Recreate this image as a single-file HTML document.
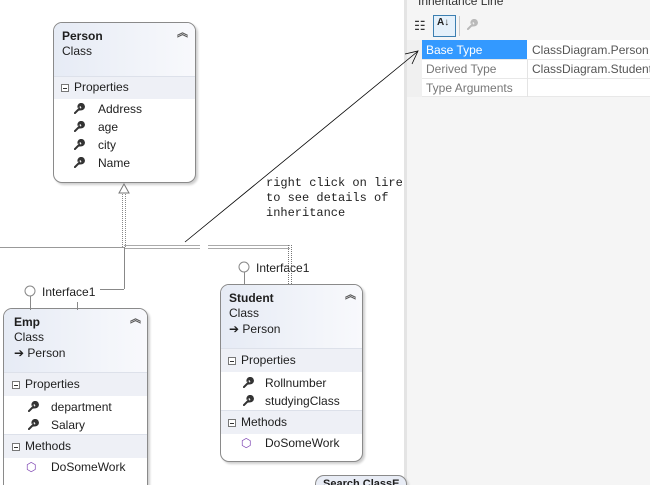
<!DOCTYPE html>
<html style="width:650px;height:485px;overflow:hidden"><head><meta charset="utf-8"><style>
*{margin:0;padding:0;box-sizing:border-box}
body{width:650px;height:485px;overflow:hidden;background:#fff;position:relative;font-family:"Liberation Sans",sans-serif;font-size:12px;color:#1e1e1e}
.a{position:absolute}
.box{position:absolute;border:1px solid #8a8a8a;border-radius:9px;background:#fff;box-shadow:2px 2px 2px #cfcfcf;overflow:hidden}
.hdr{position:absolute;left:0;right:0;top:0;background:linear-gradient(to right,#e6ebf5,#f3f5fa 70%,#f8f9fc)}
.band{position:absolute;left:0;right:0;background:#eef0f6;border-top:1px solid #dde1ea}
.t{position:absolute;white-space:nowrap}
.b{font-weight:bold}
.chev{position:absolute;font-size:11px;color:#555;font-weight:bold;line-height:8px}
.mi{display:inline-block;width:8px;height:8px;border:1px solid #777;background:#fff;position:relative;vertical-align:middle;margin-right:5px}
.mi:after{content:"";position:absolute;left:1px;top:3px;width:4px;height:1px;background:#333}
.w{position:absolute}
.mono{font-family:"Liberation Mono",monospace;font-size:12px}
</style></head><body>
<svg width="0" height="0" style="position:absolute"><defs>
<symbol id="wr" viewBox="0 0 12 12"><path d="M1,11 L6,6 M5,5 A3,3 0 1 1 8,7 L9.5,5.5 L8,3 L9.5,2 A3,3 0 0 0 5,5Z" stroke="#333" stroke-width="2.2" fill="#333" stroke-linecap="round"/></symbol>
</defs></svg>

<!-- right panel -->
<div class="a" style="left:404px;top:0;width:246px;height:485px;background:#f5f5f5;border-left:3px solid #e4e4e4"></div>
<div class="t" style="left:418px;top:-6px;color:#333">Inheritance Line</div>
<div class="t" style="left:414px;top:18px;font-size:13px;color:#333">☷</div>
<div class="a" style="left:433px;top:15px;width:23px;height:22px;border:1px solid #3c7fb1;background:#e5f1fb"></div>
<div class="t b" style="left:437px;top:17px;font-size:10px;color:#222">A↓</div>
<div class="a" style="left:459px;top:16px;width:1px;height:20px;background:#ccc"></div>
<svg class="w" style="left:467px;top:19px" width="11" height="11"><use href="#wr" opacity="0.3"/></svg>
<div class="a" style="left:407px;top:40px;width:15px;height:57px;background:#f0f0f0"></div>
<div class="a" style="left:422px;top:40px;width:105px;height:19px;background:#3399ff"></div>
<div class="t" style="left:426px;top:43px;color:#fff">Base Type</div>
<div class="a" style="left:527px;top:40px;width:123px;height:19px;background:#fff"></div>
<div class="t" style="left:532px;top:43px;color:#555">ClassDiagram.Person</div>
<div class="a" style="left:422px;top:59px;width:228px;height:19px;background:#fff;border-top:1px solid #e8e8e8"></div>
<div class="a" style="left:527px;top:59px;width:1px;height:38px;background:#e4e4e4"></div>
<div class="t" style="left:426px;top:62px;color:#777">Derived Type</div>
<div class="t" style="left:532px;top:62px;color:#555">ClassDiagram.Student</div>
<div class="a" style="left:422px;top:78px;width:228px;height:19px;background:#fff;border-top:1px solid #e8e8e8;border-bottom:1px solid #e8e8e8"></div>
<div class="a" style="left:527px;top:78px;width:1px;height:19px;background:#e4e4e4"></div>
<div class="t" style="left:426px;top:81px;color:#777">Type Arguments</div>

<!-- lines -->
<svg class="a" style="left:0;top:0;z-index:2" width="650" height="485">
<line x1="0" y1="247.5" x2="124" y2="247.5" stroke="#999"/>
<line x1="124" y1="245.5" x2="290" y2="245.5" stroke="#aaa"/>
<line x1="124" y1="248.5" x2="290" y2="248.5" stroke="#aaa"/>
<line x1="122.5" y1="190" x2="122.5" y2="247" stroke="#888" stroke-dasharray="1 1"/>
<line x1="125.5" y1="190" x2="125.5" y2="247" stroke="#888" stroke-dasharray="1 1"/>
<polygon points="119,193 124,184 129,193" fill="#fff" stroke="#777"/>
<line x1="124.5" y1="247" x2="124.5" y2="289" stroke="#888"/>
<line x1="100" y1="289.5" x2="124" y2="289.5" stroke="#888"/>
<line x1="288.5" y1="245" x2="288.5" y2="285" stroke="#777" stroke-dasharray="1 1"/>
<line x1="291.5" y1="245" x2="291.5" y2="285" stroke="#777" stroke-dasharray="1 1"/>
<rect x="200" y="244" width="8" height="6" fill="#fff"/>
<circle cx="30" cy="291" r="5" fill="#fff" stroke="#888"/>
<line x1="30.5" y1="296" x2="30.5" y2="310" stroke="#888"/>
<line x1="77.5" y1="302" x2="77.5" y2="310" stroke="#888"/>
<circle cx="244" cy="267" r="5" fill="#fff" stroke="#888"/>
<line x1="244.5" y1="272" x2="244.5" y2="285" stroke="#888"/>
<line x1="185" y1="242" x2="417" y2="52" stroke="#000" stroke-width="0.8"/>
<path d="M405,54 L418,51 L412,64" fill="none" stroke="#000" stroke-width="0.8"/>
</svg>
<div class="t" style="left:42px;top:285px">Interface1</div>
<div class="t" style="left:256px;top:261px">Interface1</div>

<div class="t mono" style="left:266px;top:176px;line-height:15px">right click on lire<br>to see details of<br>inheritance</div>

<!-- Person -->
<div class="box" style="left:53px;top:22px;width:143px;height:161px">
 <div class="hdr" style="height:53px"></div>
 <div class="t b" style="left:8px;top:6px">Person</div>
 <div class="t" style="left:8px;top:21px">Class</div>
 <div class="chev" style="left:123px;top:6px">︽</div>
 <div class="band" style="top:53px;height:23px"></div>
 <div class="t" style="left:7px;top:57px"><span class="mi"></span>Properties</div>
 <svg class="w" style="left:20px;top:80px" width="11" height="11"><use href="#wr"/></svg>
 <div class="t" style="left:44px;top:79px">Address</div>
 <svg class="w" style="left:20px;top:98px" width="11" height="11"><use href="#wr"/></svg>
 <div class="t" style="left:44px;top:97px">age</div>
 <svg class="w" style="left:20px;top:116px" width="11" height="11"><use href="#wr"/></svg>
 <div class="t" style="left:44px;top:115px">city</div>
 <svg class="w" style="left:20px;top:134px" width="11" height="11"><use href="#wr"/></svg>
 <div class="t" style="left:44px;top:133px">Name</div>
</div>

<!-- Emp -->
<div class="box" style="left:3px;top:308px;width:145px;height:190px">
 <div class="hdr" style="height:63px"></div>
 <div class="t b" style="left:10px;top:6px">Emp</div>
 <div class="t" style="left:10px;top:21px">Class</div>
 <div class="t" style="left:10px;top:37px">➔ Person</div>
 <div class="chev" style="left:126px;top:6px">︽</div>
 <div class="band" style="top:63px;height:24px"></div>
 <div class="t" style="left:8px;top:68px"><span class="mi"></span>Properties</div>
 <svg class="w" style="left:24px;top:92px" width="11" height="11"><use href="#wr"/></svg>
 <div class="t" style="left:47px;top:91px">department</div>
 <svg class="w" style="left:24px;top:110px" width="11" height="11"><use href="#wr"/></svg>
 <div class="t" style="left:47px;top:109px">Salary</div>
 <div class="band" style="top:125px;height:24px"></div>
 <div class="t" style="left:8px;top:130px"><span class="mi"></span>Methods</div>
 <div class="t" style="left:22px;top:151px;color:#7a3fb0">⬡</div>
 <div class="t" style="left:47px;top:151px">DoSomeWork</div>
</div>

<!-- Student -->
<div class="box" style="left:220px;top:284px;width:143px;height:178px">
 <div class="hdr" style="height:63px"></div>
 <div class="t b" style="left:8px;top:6px">Student</div>
 <div class="t" style="left:8px;top:21px">Class</div>
 <div class="t" style="left:8px;top:37px">➔ Person</div>
 <div class="chev" style="left:124px;top:6px">︽</div>
 <div class="band" style="top:63px;height:24px"></div>
 <div class="t" style="left:7px;top:68px"><span class="mi"></span>Properties</div>
 <svg class="w" style="left:22px;top:92px" width="11" height="11"><use href="#wr"/></svg>
 <div class="t" style="left:44px;top:91px">Rollnumber</div>
 <svg class="w" style="left:22px;top:110px" width="11" height="11"><use href="#wr"/></svg>
 <div class="t" style="left:44px;top:109px">studyingClass</div>
 <div class="band" style="top:125px;height:24px"></div>
 <div class="t" style="left:7px;top:130px"><span class="mi"></span>Methods</div>
 <div class="t" style="left:20px;top:151px;color:#7a3fb0">⬡</div>
 <div class="t" style="left:44px;top:151px">DoSomeWork</div>
</div>

<!-- bottom comment box -->
<div class="box" style="left:315px;top:475px;width:92px;height:30px;background:#e8ecf5;z-index:3"></div>
<div class="t b" style="left:323px;top:478px;font-size:11px;z-index:3">Search ClassE</div>
</body></html>
